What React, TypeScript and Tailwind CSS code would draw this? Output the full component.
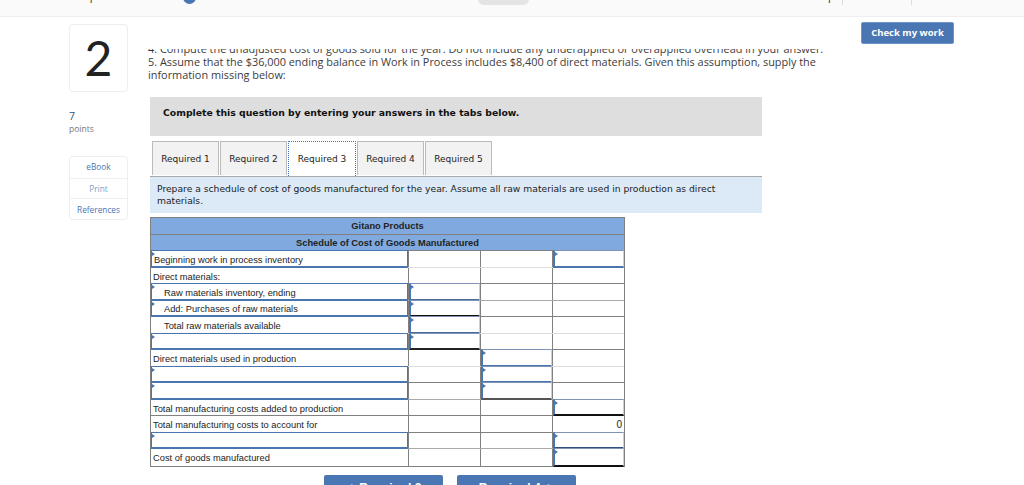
const proxima = "font-['Open_Sans','Lato',sans-serif]";

type Row = {
  label?: string;
  indent?: boolean;
  labelInput?: boolean;
  a?: string;
  b?: string;
  c?: string;
  value?: string;
  line: string;
};

const rows: Row[] = [
  { label: "Beginning work in process inventory", labelInput: true, c: "border-b-[#4a76b0]", line: "border-[#dddddd]" },
  { label: "Direct materials:", line: "border-[#808080]" },
  { label: "Raw materials inventory, ending", indent: true, labelInput: true, a: "border-b-[#4a6a9c]", line: "border-[#aaaaaa]" },
  { label: "Add: Purchases of raw materials", indent: true, labelInput: true, a: "border-b-[#111111]", line: "border-[#808080]" },
  { label: "Total raw materials available", indent: true, a: "border-b-[#4a6a9c]", line: "border-[#dddddd]" },
  { labelInput: true, a: "border-b-[#222222]", line: "border-[#808080]" },
  { label: "Direct materials used in production", b: "border-b-[#4a76b0]", line: "border-[#dddddd]" },
  { labelInput: true, b: "border-b-[#4a76b0]", line: "border-[#808080]" },
  { labelInput: true, b: "border-b-[#555555]", line: "border-[#aaaaaa]" },
  { label: "Total manufacturing costs added to production", c: "border-b-[#111111]", line: "border-[#808080]" },
  { label: "Total manufacturing costs to account for", value: "0", line: "border-[#808080]" },
  { labelInput: true, c: "border-b-[#2f4f80]", line: "border-[#aaaaaa]" },
  { label: "Cost of goods manufactured", c: "border-b-[#111111]", line: "border-[#808080]" },
];

const Marker = () => (
  <span className="absolute left-0 top-[1px] w-0 h-0 border-y-[2.5px] border-l-[3px] border-y-transparent border-l-[#4a76b0]" />
);

const LabelInput = ({ children, indent }: { children?: string; indent?: boolean }) => (
  <div className={`relative z-10 -mt-px h-[calc(100%+2px)] w-full border border-b-2 border-[#4a76b0] bg-white flex items-center pt-[4px] leading-none ${indent ? "pl-[12px]" : "pl-[2px]"}`}>
    <Marker />
    <span className="truncate">{children}</span>
  </div>
);

const NumCell = ({ input, value }: { input?: string; value?: string }) => (
  <div className="flex-1 min-w-0 border-l border-[#808080] text-right">
    {input ? (
      <div className={`relative z-10 -mt-px h-[calc(100%+2px)] border-t border-t-[#7f93b4] border-l-2 border-l-[#4a76b0] border-r border-r-[#c8d0dc] border-b-2 ${input} bg-white`}>
        <Marker />
      </div>
    ) : (
      <span className="block pr-[2px] pt-px leading-[16px] text-[10px]">{value}</span>
    )}
  </div>
);

const Tab = ({ name, active }: { name: string; active?: boolean }) => (
  <div
    className={
      active
        ? "w-[68px] h-[35px] relative z-10 bg-white border-[1.5px] border-b-0 border-dotted border-[#3f74c0] flex items-center justify-center pt-[1px]"
        : "w-[67px] h-[34px] bg-[#f2f2f2] border border-b-0 border-[#bbbbbb] flex items-center justify-center pt-[2px]"
    }
  >
    {name}
  </div>
);

export default function App() {
  return (
    <div className="w-[1024px] h-[485px] overflow-hidden bg-white">
      {/* top bar, cut off by the scroll */}
      <div className={`h-[17px] bg-[#fafafa] border-b border-[#eeeeee] overflow-hidden flex items-start text-[11px] text-[#333333] ${proxima}`}>
        <div className="ml-[70px] w-[108px] -mt-[12px] leading-[16px] whitespace-nowrap">Chapter 5 Homework</div>
        <div className="ml-[5px] -mt-[9px] w-[13px] h-[13px] rounded-full bg-[#4a76b4]" />
        <div className="ml-[282px] w-[51px] h-[6px] -mt-[1px] rounded-b-[10px] bg-[#e4e4e4]" />
        <div className="ml-[282px] w-[21px] -mt-[12px] leading-[16px] whitespace-nowrap">Help</div>
        <div className="ml-[10px] w-px h-[5px] bg-[#dddddd]" />
        <div className="ml-[8px] w-[51px] -mt-[12px] leading-[16px] whitespace-nowrap">Save &amp; Exit</div>
        <div className="ml-[9px] w-px h-[5px] bg-[#dddddd]" />
        <div className="ml-[8px] -mt-[12px] leading-[16px] whitespace-nowrap text-[#1f4f9a]">Submit</div>
      </div>

      <div className="flex items-start">
        {/* left column */}
        <div className={`ml-[69px] w-[59px] pt-[7px] ${proxima}`}>
          <div className="h-[68px] rounded-[4px] border border-[#eeeeee] flex items-center justify-center text-[48px] leading-none text-[#222222] font-['Lato',sans-serif]">
            2
          </div>
          <div className="mt-[18px] text-[10.5px] leading-[13px] text-[#2f4f80]">7</div>
          <div className="text-[8.5px] leading-[12px] text-[#777777]">points</div>
          <div className="mt-[21px] rounded-[4px] border border-[#eeeeee] text-[8.3px] text-[#4a76b4] text-center">
            <div className="h-[22px] leading-[20px] border-b border-[#f0f0f0]">eBook</div>
            <div className="h-[20px] leading-[20px] border-b border-[#f0f0f0] text-[#7f9cc8]">Print</div>
            <div className="h-[20px] leading-[21px]">References</div>
          </div>
        </div>

        {/* question */}
        <div className="ml-[20px] w-[680px] pt-[32px]">
          <div className={`h-[33px] overflow-hidden text-[10.9px] leading-[13px] text-[#3c3c3c] whitespace-nowrap ${proxima}`}>
            <div className="-mt-[7px]">4. Compute the unadjusted cost of goods sold for the year. Do not include any underapplied or overapplied overhead in your answer.</div>
            <div>5. Assume that the $36,000 ending balance in Work in Process includes $8,400 of direct materials. Given this assumption, supply the</div>
            <div>information missing below:</div>
          </div>

          <div className="ml-[2px] mt-[15px] w-[612px] font-['DejaVu_Sans',sans-serif]">
            <div className="h-[39px] pl-[13px] pt-[9px] bg-[#dedede] text-[9.3px] leading-[14px] font-bold text-[#111111]">
              Complete this question by entering your answers in the tabs below.
            </div>
            <div className="mt-[5px] pl-[2px] flex gap-px text-[9px] text-[#222222]">
              <Tab name="Required 1" />
              <Tab name="Required 2" />
              <Tab name="Required 3" active />
              <Tab name="Required 4" />
              <Tab name="Required 5" />
            </div>
            <div className="h-[37px] px-[7px] pt-[6px] bg-[#dceaf8] border-t border-[#aaaaaa] text-[9.2px] leading-[12px] text-[#222222]">
              Prepare a schedule of cost of goods manufactured for the year. Assume all raw materials are used in production as direct materials.
            </div>

            {/* schedule */}
            <div className="mt-[4px] w-[475px] border border-[#808080] font-['Liberation_Sans',sans-serif] text-[9.3px] text-[#222222]">
              <div className="h-[16.5px] bg-[#80aadf] border-b border-[#808080] text-center font-bold leading-[16px]">Gitano Products</div>
              <div className="h-[16.5px] bg-[#80aadf] border-b border-[#808080] text-center font-bold leading-[16px]">Schedule of Cost of Goods Manufactured</div>
              {rows.map((row, i) => (
                <div key={i} className={`flex h-[16.5px] ${i < rows.length - 1 ? `border-b ${row.line}` : ""}`}>
                  <div className={`w-[257px] shrink-0 ${row.labelInput ? "" : row.indent ? "pl-[13px]" : "pl-[2px]"}`}>
                    {row.labelInput ? (
                      <LabelInput indent={row.indent}>{row.label}</LabelInput>
                    ) : (
                      <span className="block pt-px leading-[16px]">{row.label}</span>
                    )}
                  </div>
                  <NumCell input={row.a} />
                  <NumCell input={row.b} />
                  <NumCell input={row.c} value={row.value} />
                </div>
              ))}
            </div>

            <div className="mt-[8px] ml-[174px] flex gap-[14px] text-[12px] font-bold text-white font-['Liberation_Sans',sans-serif]">
              <div className="w-[119px] h-[24px] rounded-t-[2px] bg-[#4a76b4] text-center leading-[26px]">&lt;&nbsp; Required 2</div>
              <div className="w-[119px] h-[24px] rounded-t-[2px] bg-[#4a76b4] text-center leading-[26px]">Required 4 &nbsp;&gt;</div>
            </div>
          </div>
        </div>

        {/* check button */}
        <div className="ml-[33px] pt-[5px]">
          <div className={`w-[93px] h-[22px] rounded-[2px] bg-[#4a76b4] border border-[#6f94c8] text-white text-[9.5px] font-bold text-center leading-[20px] ${proxima}`}>
            Check my work
          </div>
        </div>
      </div>
    </div>
  );
}
